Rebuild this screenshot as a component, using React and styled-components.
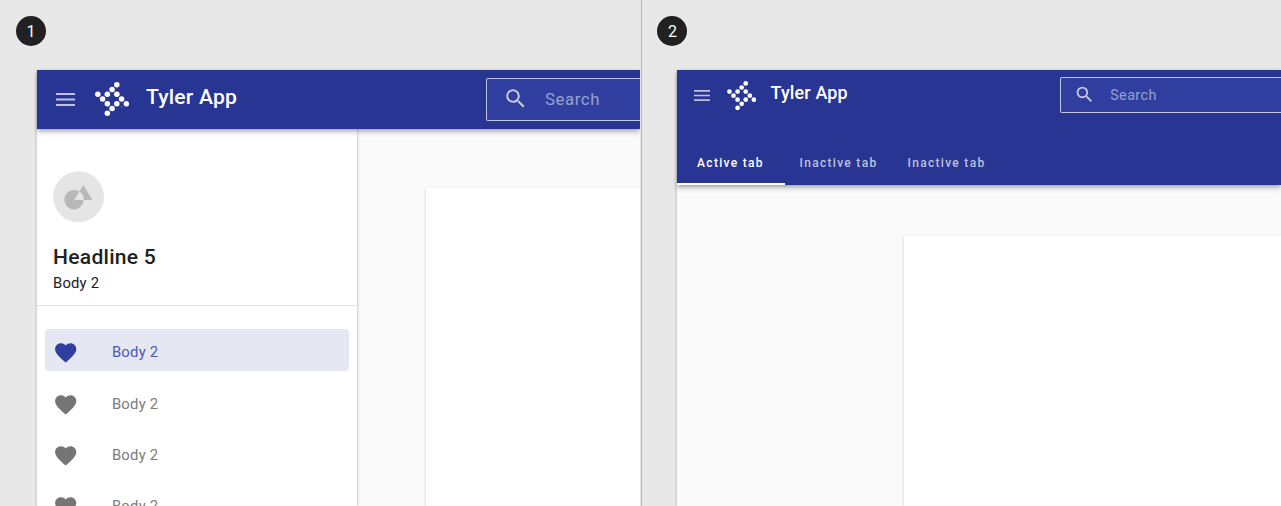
import React from "react";
import styled, { createGlobalStyle } from "styled-components";

const GlobalStyle = createGlobalStyle`
  *, *::before, *::after { box-sizing: border-box; }
  body {
    margin: 0;
    overflow: hidden;
    background: #e8e8e8;
    font-family: Roboto, "Liberation Sans", sans-serif;
  }
  svg { display: block; flex: none; }
`;

const Board = styled.main`
  display: flex;
  height: 506px;
  width: 1281px;
  overflow: hidden;
`;

const Pane = styled.section`
  width: ${(p) => p.$width}px;
  flex: none;
  padding: 16px ${(p) => p.$right || 0}px 0 0;
  border-left: ${(p) => (p.$divided ? "1px solid #bababa" : "0")};
  overflow: hidden;
`;

const StepBadge = styled.div`
  width: 30px;
  height: 30px;
  margin-left: ${(p) => p.$left}px;
  border-radius: 50%;
  background: #212121;
  color: #fff;
  font-size: 16px;
  line-height: 31px;
  text-align: center;
`;

const Clip = styled.div`
  overflow: hidden;
  padding: 14px 0 0 ${(p) => p.$left}px;
  margin-top: 10px;
`;

const AppWindow = styled.div`
  height: 436px;
  background: #fafafa;
  display: flex;
  flex-direction: column;
  box-shadow: 0 1px 3px rgba(0, 0, 0, 0.26);
`;

const AppBar = styled.header`
  position: relative;
  z-index: 1;
  flex: none;
  display: flex;
  flex-direction: column;
  justify-content: space-between;
  height: ${(p) => p.$height}px;
  background: #283593;
  color: #fff;
  box-shadow: 0 2px 4px -1px rgba(0, 0, 0, 0.3), 0 4px 5px rgba(0, 0, 0, 0.14);
`;

const BarRow = styled.div`
  display: flex;
  align-items: flex-start;
`;

const Slot = styled.div`
  flex: none;
  padding: ${(p) => p.$top}px 0 0 ${(p) => p.$left}px;
`;

const AppTitle = styled.h1`
  margin: 0;
  padding: ${(p) => p.$top}px 0 0;
  margin-left: ${(p) => p.$left}px;
  width: ${(p) => p.$width}px;
  flex: none;
  font-size: ${(p) => p.$size}px;
  line-height: 24px;
  font-weight: 500;
  letter-spacing: ${(p) => p.$spacing}px;
  white-space: nowrap;
`;

const SearchField = styled.div`
  flex: 1;
  display: flex;
  align-items: center;
  height: ${(p) => p.$height}px;
  margin-top: ${(p) => p.$top}px;
  padding-left: ${(p) => p.$pad}px;
  padding-bottom: ${(p) => p.$lift || 0}px;
  gap: ${(p) => p.$gap}px;
  border: 1px solid rgba(255, 255, 255, 0.7);
  border-right: 0;
  border-radius: 2px 0 0 2px;
  background: #303f9f;
  color: rgba(255, 255, 255, 0.5);
  font-size: ${(p) => p.$size}px;
  letter-spacing: ${(p) => p.$spacing}px;
`;

const TabBar = styled.nav`
  display: flex;
`;

const Tab = styled.div`
  width: 108px;
  height: 44px;
  padding-right: 1px;
  border-bottom: 2px solid ${(p) => (p.$active ? "#fff" : "transparent")};
  color: ${(p) => (p.$active ? "#fff" : "rgba(255, 255, 255, 0.7)")};
  font-size: 12px;
  font-weight: 500;
  letter-spacing: 1.3px;
  line-height: 44px;
  text-align: center;
  white-space: nowrap;
`;

const Body = styled.div`
  flex: 1;
  min-height: 0;
  display: flex;
  overflow: hidden;
`;

const Drawer = styled.aside`
  width: 320px;
  flex: none;
  background: #fff;
  box-shadow: 0 0 1px 1px rgba(0, 0, 0, 0.07), 1px 0 3px rgba(0, 0, 0, 0.1);
`;

const DrawerHeader = styled.div`
  height: 177px;
  padding: 42px 16px 0;
  border-bottom: 1px solid #e0e0e0;
  color: #212121;
`;

const Headline = styled.h2`
  margin: 21px 0 0;
  font-size: 21.1px;
  line-height: 28px;
  font-weight: 500;
  letter-spacing: 0.25px;
`;

const Subtitle = styled.p`
  margin: 2px 0 0;
  font-size: 14.8px;
  line-height: 20px;
  letter-spacing: 0.2px;
`;

const NavList = styled.div`
  display: flex;
  flex-direction: column;
  gap: 9px;
  padding: 23px 8px 0 7.5px;
`;

const NavItem = styled.div`
  display: flex;
  align-items: center;
  gap: 33.5px;
  height: 42px;
  flex: none;
  padding: 6px 0 0 8.5px;
  border-radius: 4px;
  background: ${(p) => (p.$active ? "#e5e7f3" : "transparent")};
  color: ${(p) => (p.$active ? "#303f9f" : "#757575")};

  &:first-child { margin-bottom: 0.5px; }
`;

const NavLabel = styled.span`
  padding-bottom: 2px;
  color: ${(p) => (p.$active ? "#4a58ba" : "#7b7b7b")};
  font-size: 14.8px;
  line-height: 20px;
  letter-spacing: 0.25px;
`;

const Content = styled.div`
  flex: 1;
  display: flex;
  padding: ${(p) => p.$top}px 0 0 ${(p) => p.$left}px;
`;

const Card = styled.div`
  flex: 1;
  background: #fff;
  box-shadow: 0 1px 3px rgba(0, 0, 0, 0.2);
`;

const MenuIcon = ({ width, height }) => (
  <svg width={width} height={height} viewBox="0 0 18 12" preserveAspectRatio="none">
    <path d="M0 0h18v1.8H0zM0 5.1h18v1.8H0zM0 10.2h18V12H0z" fill="#fff" fillOpacity="0.7" />
  </svg>
);

const LOGO_DOTS = [
  [4, 0], [3, 1], [0, 2], [2, 2], [4, 2], [1, 3],
  [5, 3], [2, 4], [4, 4], [6, 4], [3, 5], [2, 6],
];

const Logo = ({ size }) => (
  <svg width={size} height={size} viewBox="-0.6 -0.6 7.2 7.2" fill="#fff">
    {LOGO_DOTS.map(([x, y]) => (
      <circle key={`${x}-${y}`} cx={x} cy={y} r="0.58" />
    ))}
    <circle cx="5.03" cy="4.65" r="0.13" opacity="0.35" />
  </svg>
);

const SearchIcon = ({ size }) => (
  <svg width={size} height={size} viewBox="0 0 24 24" fill="#fff" fillOpacity="0.72">
    <path d="M15.5 14h-.79l-.28-.27A6.471 6.471 0 0 0 16 9.5 6.5 6.5 0 1 0 9.5 16c1.61 0 3.09-.59 4.23-1.57l.27.28v.79l5 4.99L20.49 19l-4.99-5zm-6 0C7.01 14 5 11.99 5 9.5S7.01 5 9.5 5 14 7.01 14 9.5 11.99 14 9.5 14z" />
  </svg>
);

const HeartIcon = () => (
  <svg width="25.4" height="25.4" viewBox="0 0 24 24" fill="currentColor">
    <path d="M12 21.35l-1.45-1.32C5.4 15.36 2 12.28 2 8.5 2 5.42 4.42 3 7.5 3c1.74 0 3.41.81 4.5 2.09C13.09 3.81 14.76 3 16.5 3 19.58 3 22 5.42 22 8.5c0 3.78-3.4 6.86-8.55 11.54L12 21.35z" />
  </svg>
);

const Avatar = () => (
  <svg width="51" height="51" viewBox="0 0 51 51">
    <circle cx="25.5" cy="25.7" r="25.4" fill="#e5e5e5" />
    <circle cx="21" cy="28.7" r="9.7" fill="#b8b8b8" />
    <path fill="#b8b8b8" d="M30.3 14L39.3 28.9H30.7A9.7 9.7 0 0 0 26.3 20.6z" />
    <path fill="#e5e5e5" d="M26.3 20.6A9.7 9.7 0 0 1 30.7 28.9H21.3z" />
  </svg>
);

const NAV = [true, false, false, false];
const TABS = ["Active tab", "Inactive tab", "Inactive tab"];

export default function App() {
  return (
    <>
      <GlobalStyle />
      <Board>
        <Pane $width={641} $right={1}>
          <StepBadge $left={16}>1</StepBadge>
          <Clip $left={37}>
            <AppWindow>
              <AppBar $height={59}>
                <BarRow>
                  <Slot $left={19} $top={23}><MenuIcon width={19} height={13} /></Slot>
                  <Slot $left={19.9} $top={12.4}><Logo size={34.2} /></Slot>
                  <AppTitle $left={16.9} $top={15} $width={340} $size={21.1} $spacing={0.2}>
                    Tyler App
                  </AppTitle>
                  <SearchField $height={43} $top={8} $pad={15.8} $gap={17} $lift={1} $size={16.9} $spacing={0.5}>
                    <SearchIcon size={25.3} />
                    <span>Search</span>
                  </SearchField>
                </BarRow>
              </AppBar>
              <Body>
                <Drawer>
                  <DrawerHeader>
                    <Avatar />
                    <Headline>Headline 5</Headline>
                    <Subtitle>Body 2</Subtitle>
                  </DrawerHeader>
                  <NavList>
                    {NAV.map((active, i) => (
                      <NavItem key={i} $active={active}>
                        <HeartIcon />
                        <NavLabel $active={active}>Body 2</NavLabel>
                      </NavItem>
                    ))}
                  </NavList>
                </Drawer>
                <Content $top={59} $left={69}><Card /></Content>
              </Body>
            </AppWindow>
          </Clip>
        </Pane>
        <Pane $width={640} $divided>
          <StepBadge $left={15.4}>2</StepBadge>
          <Clip $left={35}>
            <AppWindow>
              <AppBar $height={115}>
                <BarRow>
                  <Slot $left={17} $top={20}><MenuIcon width={16.4} height={11} /></Slot>
                  <Slot $left={16.8} $top={10.6}><Logo size={29.3} /></Slot>
                  <AppTitle $left={14} $top={11} $width={289.5} $size={17.9} $spacing={0.18}>
                    Tyler App
                  </AppTitle>
                  <SearchField $height={36} $top={7} $pad={13.3} $gap={14.7} $size={14.3} $spacing={0.45}>
                    <SearchIcon size={21.2} />
                    <span>Search</span>
                  </SearchField>
                </BarRow>
                <TabBar>
                  {TABS.map((label, i) => (
                    <Tab key={i} $active={i === 0}>{label}</Tab>
                  ))}
                </TabBar>
              </AppBar>
              <Body>
                <Content $top={50.5} $left={226.5}><Card /></Content>
              </Body>
            </AppWindow>
          </Clip>
        </Pane>
      </Board>
    </>
  );
}
